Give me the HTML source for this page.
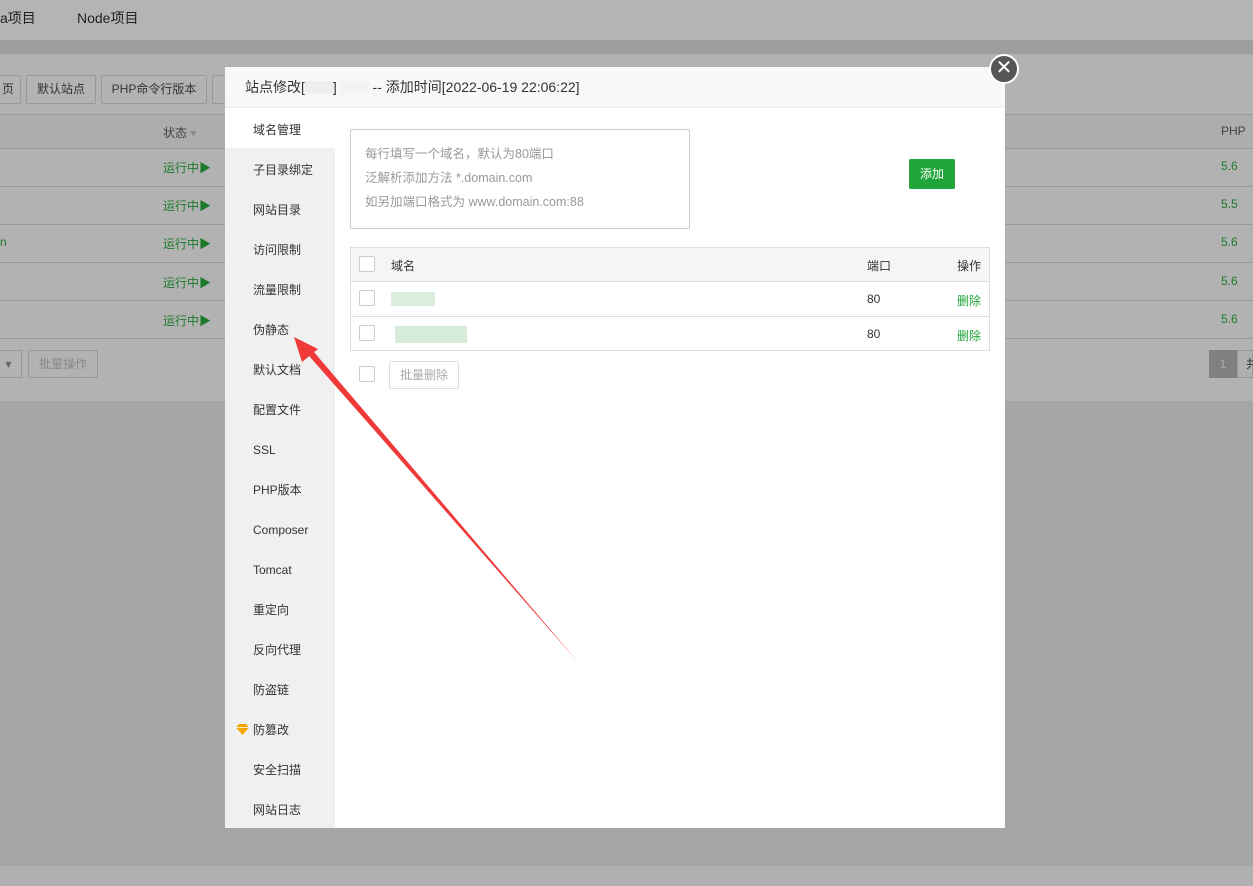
<!DOCTYPE html>
<html><head><meta charset="utf-8"><style>
*{margin:0;padding:0;box-sizing:border-box}
body{width:1253px;height:886px;overflow:hidden;background:#a6a6a6;font-family:"Liberation Sans","Noto Sans CJK SC",sans-serif;font-size:12px;color:#333;position:relative}
.abs{position:absolute}
.g{color:#1c7a2a}
.btn{position:absolute;top:75px;height:29px;border:1px solid #999;border-radius:2px;background:#b3b3b3;color:#333;font-size:12px;line-height:27px;text-align:center}
.row{position:absolute;left:0;width:1253px;height:38px;border-bottom:1px solid #9a9a9a}
.modal{position:absolute;left:225px;top:67px;width:780px;height:761px;background:#fff}
.side{position:absolute;left:0;top:41px;width:110px;height:720px;background:#f0f0f0}
.side div{height:40px;line-height:44px;padding-left:28px;font-size:12px;color:#333;position:relative}
.side div.on{background:#fff}
.cb{position:absolute;width:16px;height:16px;border:1px solid #ccc;border-radius:2px;background:#fff}
</style></head><body>
<div class="abs" style="left:0;top:0;width:1253px;height:40px;background:#b4b4b4"></div>
<div class="abs" style="left:0;top:8px;font-size:14px;color:#222">a项目</div>
<div class="abs" style="left:77px;top:8px;font-size:14px;color:#222">Node项目</div>
<div class="abs" style="left:0;top:40px;width:1253px;height:14px;background:#9e9e9e"></div>
<div class="abs" style="left:0;top:54px;width:1253px;height:347px;background:#b2b2b2"></div>
<div class="btn" style="left:-5px;width:26px">页</div>
<div class="btn" style="left:26px;width:70px">默认站点</div>
<div class="btn" style="left:101px;width:106px">PHP命令行版本</div>
<div class="btn" style="left:212px;width:20px"></div>
<div class="abs" style="left:0;top:114px;width:1253px;height:35px;background:#adadad;border-top:1px solid #9a9a9a;border-bottom:1px solid #9a9a9a"></div>
<div class="abs" style="left:163px;top:124px;color:#444">状态 <span style="color:#888">▾</span></div>
<div class="abs" style="left:1221px;top:124px;color:#444">PHP</div>
<div class="row" style="top:149px"></div><div class="row" style="top:187px"></div><div class="row" style="top:225px"></div><div class="row" style="top:263px"></div><div class="row" style="top:301px"></div>
<div class="abs g" style="left:163px;top:159px">运行中▶</div><div class="abs g" style="left:1221px;top:159px">5.6</div>
<div class="abs g" style="left:163px;top:197px">运行中▶</div><div class="abs g" style="left:1221px;top:197px">5.5</div>
<div class="abs g" style="left:0;top:235px">n</div>
<div class="abs g" style="left:163px;top:235px">运行中▶</div><div class="abs g" style="left:1221px;top:235px">5.6</div>
<div class="abs g" style="left:163px;top:274px">运行中▶</div><div class="abs g" style="left:1221px;top:274px">5.6</div>
<div class="abs g" style="left:163px;top:312px">运行中▶</div><div class="abs g" style="left:1221px;top:312px">5.6</div>
<div class="abs" style="left:-5px;top:350px;width:27px;height:28px;border:1px solid #999;background:#b3b3b3;color:#666;text-align:center;line-height:26px">▾</div>
<div class="abs" style="left:28px;top:350px;width:70px;height:28px;border:1px solid #999;border-radius:2px;color:#888;text-align:center;line-height:26px">批量操作</div>
<div class="abs" style="left:1209px;top:350px;width:28px;height:28px;background:#808080;color:#aaa;text-align:center;line-height:28px">1</div>
<div class="abs" style="left:1237px;top:350px;width:16px;height:28px;background:#b0b0b0;border:1px solid #999;line-height:26px;padding-left:8px">共</div>
<div class="abs" style="left:0;top:866px;width:1253px;height:20px;background:#b0b0b0"></div>

<div class="modal">
<div class="abs" style="left:0;top:0;width:780px;height:41px;background:#f8f8f8;border-bottom:1px solid #eee;line-height:41px;padding-left:20px;font-size:14px;color:#333">站点修改[<span style="color:#eee">▇▇</span>] <span style="color:#f3f3f3">▇▇</span> -- 添加时间[2022-06-19 22:06:22]</div>
<div class="side">
<div class="on">域名管理</div><div>子目录绑定</div><div>网站目录</div><div>访问限制</div><div>流量限制</div><div>伪静态</div><div>默认文档</div><div>配置文件</div><div>SSL</div><div>PHP版本</div><div>Composer</div><div>Tomcat</div><div>重定向</div><div>反向代理</div><div>防盗链</div><div><svg style="position:absolute;left:11px;top:16px" width="13" height="11" viewBox="0 0 13 11"><polygon points="3,0 10,0 13,3.5 6.5,11 0,3.5" fill="#f5a500"/><polyline points="0,3.5 13,3.5" stroke="#fff" stroke-width="0.8"/></svg>防篡改</div><div>安全扫描</div><div>网站日志</div>
</div>
<div class="abs" style="left:125px;top:62px;width:340px;height:100px;border:1px solid #ccc;border-radius:2px;padding:12px 14px;color:#999;line-height:24px;font-size:12.5px">每行填写一个域名，默认为80端口<br>泛解析添加方法 *.domain.com<br>如另加端口格式为 www.domain.com:88</div>
<div class="abs" style="left:684px;top:92px;width:46px;height:30px;background:#20a53a;border-radius:2px;color:#fff;text-align:center;line-height:30px">添加</div>
<div class="abs" style="left:125px;top:180px;width:640px;height:104px;border:1px solid #ddd"></div>
<div class="abs" style="left:126px;top:181px;width:638px;height:34px;background:#f5f5f5;border-bottom:1px solid #ddd"></div>
<div class="abs" style="left:126px;top:249px;width:638px;height:1px;background:#ddd"></div>
<div class="cb" style="left:134px;top:189px"></div><div class="abs" style="left:166px;top:190px">域名</div><div class="abs" style="left:642px;top:190px">端口</div><div class="abs" style="left:732px;top:190px">操作</div>
<div class="cb" style="left:134px;top:223px"></div><div class="abs" style="left:166px;top:225px;width:44px;height:14px;background:#dbeede"></div><div class="abs" style="left:642px;top:225px">80</div><div class="abs" style="left:732px;top:225px;color:#20a53a">删除</div>
<div class="cb" style="left:134px;top:258px"></div><div class="abs" style="left:170px;top:259px;width:72px;height:17px;background:#d6eddb"></div><div class="abs" style="left:642px;top:260px">80</div><div class="abs" style="left:732px;top:260px;color:#20a53a">删除</div>
<div class="cb" style="left:134px;top:299px"></div>
<div class="abs" style="left:164px;top:294px;width:70px;height:28px;border:1px solid #ddd;border-radius:2px;color:#aaa;text-align:center;line-height:26px">批量删除</div>
</div>
<div class="abs" style="left:989px;top:54px;width:30px;height:30px;border-radius:50%;background:#555;border:2px solid #fff;color:#fff;text-align:center;line-height:25px;font-size:20px">✕</div>
<svg class="abs" style="left:0;top:0" width="1253" height="886"><polygon points="578,662 303,349 308,345" fill="#f03a3a"/><polygon points="294,337 318,349 302,362" fill="#f03a3a"/></svg>
</body></html>
